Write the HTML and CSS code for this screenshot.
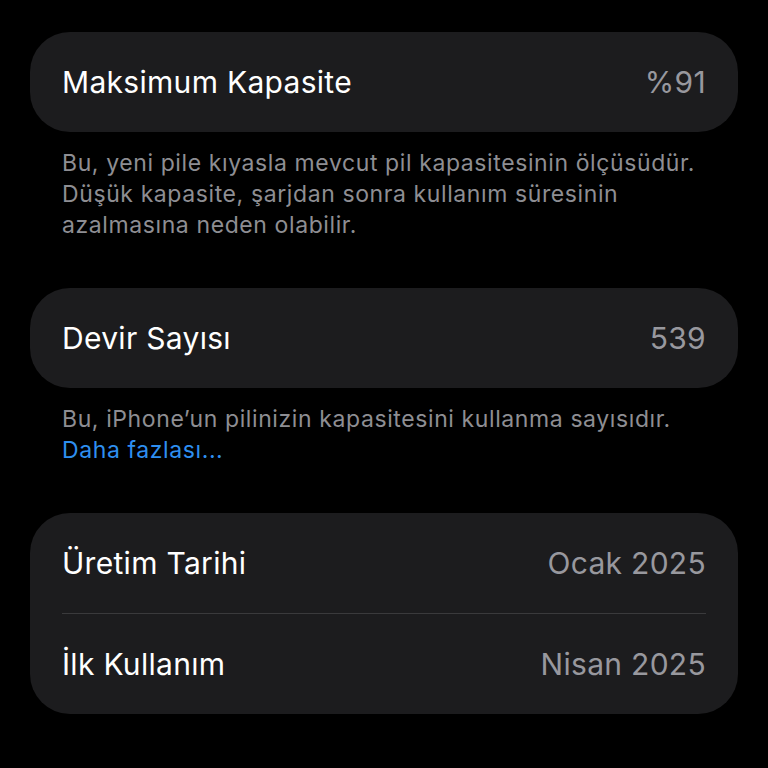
FILE: index.html
```html
<!DOCTYPE html>
<html lang="tr">
<head>
  <meta charset="UTF-8">
  <meta name="viewport" content="width=device-width, initial-scale=1.0">
  <title>Pil Durumu</title>
  <link rel="stylesheet" href="styles.css">
</head>
<body>
  <main class="page">
    <section class="group">
      <div class="card">
        <div class="row">
          <span class="label">Maksimum Kapasite</span>
          <span class="value">%91</span>
        </div>
      </div>
      <p class="note">Bu, yeni pile kıyasla mevcut pil kapasitesinin ölçüsüdür. Düşük kapasite, şarjdan sonra kullanım süresinin azalmasına neden olabilir.</p>
    </section>

    <section class="group">
      <div class="card">
        <div class="row">
          <span class="label">Devir Sayısı</span>
          <span class="value">539</span>
        </div>
      </div>
      <p class="note">Bu, iPhone’un pilinizin kapasitesini kullanma sayısıdır.<br><a href="#" class="more">Daha fazlası...</a></p>
    </section>

    <section class="group">
      <div class="card">
        <div class="row">
          <span class="label">Üretim Tarihi</span>
          <span class="value">Ocak 2025</span>
        </div>
        <div class="sep"></div>
        <div class="row">
          <span class="label">İlk Kullanım</span>
          <span class="value">Nisan 2025</span>
        </div>
      </div>
    </section>
  </main>
</body>
</html>
```

FILE: styles.css
```css
* {
  margin: 0;
  padding: 0;
  box-sizing: border-box;
}
body {
  background-color: #000;
  font-family: Inter, "Noto Sans", sans-serif;
  color: #fff;
}
.page {
  padding: 32px 30px 0;
}
.group {
  margin-bottom: 47px;
}
.card {
  background-color: #1c1c1e;
  border-radius: 40px;
  padding: 0 32px;
}
.row {
  height: 100px;
  display: flex;
  align-items: center;
  justify-content: space-between;
  font-size: 30px;
  letter-spacing: 0.3px;
}
.value {
  color: #98989e;
}
.sep {
  height: 1px;
  background-color: #3a3a3c;
}
.note {
  margin-top: 16px;
  padding: 0 30px 0 32px;
  font-size: 23px;
  line-height: 31px;
  letter-spacing: 0.6px;
  color: #8e8e93;
}
.more {
  color: #2e8ff0;
  text-decoration: none;
}
```
